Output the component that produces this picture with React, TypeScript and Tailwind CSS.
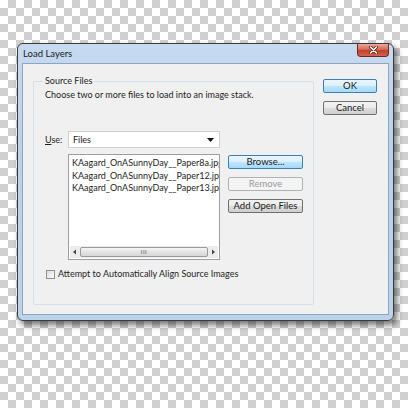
import React from "react";

const files = [
  "KAagard_OnASunnyDay__Paper8a.jpg",
  "KAagard_OnASunnyDay__Paper12.jpg",
  "KAagard_OnASunnyDay__Paper13.jpg",
];

function WinButton({
  label,
  kind = "normal",
  className = "",
}: {
  label: string;
  kind?: "normal" | "default" | "disabled";
  className?: string;
}) {
  const look =
    kind === "default"
      ? "border-[#3c7fb1] bg-[linear-gradient(#eaf6fd,#d9f0fc_50%,#bee6fd_50%,#a7d9f5)] text-[#1a1a1a]"
      : kind === "disabled"
      ? "border-[#adb2b5] bg-[#f4f4f4] text-[#9a9a9a]"
      : "border-[#707070] bg-[linear-gradient(#f2f2f2,#ebebeb_50%,#dddddd_50%,#cfcfcf)] text-[#1a1a1a]";
  return (
    <div
      className={`h-[14px] rounded-[2px] border flex items-center justify-center text-[9.5px] leading-none ${look} ${className}`}
    >
      {label}
    </div>
  );
}

export default function App() {
  return (
    <div className="w-[408px] h-[408px] relative overflow-hidden bg-white bg-[conic-gradient(#d0d0d0_25%,#ffffff_0_50%,#d0d0d0_0_75%,#ffffff_0)] bg-size-[16px_16px] font-['Lato','Noto_Sans',sans-serif] text-[#1e1e1e]">
      {/* dialog window */}
      <div className="absolute left-[17px] top-[43px] w-[377px] h-[278px] rounded-[6px] border border-[#3a3a3a] bg-[linear-gradient(#c6daf0,#b9d1ea_40%,#bcd3ec)] shadow-[3px_4px_6px_rgba(0,0,0,0.55)] flex flex-col">
        {/* title bar */}
        <div className="h-[19px] flex items-start justify-between pl-[5px] pr-[4px]">
          <span className="mt-[4px] text-[9.5px] leading-[12px] text-[#1a1a1a]">Load Layers</span>
          <div className="w-[32px] h-[13px] rounded-b-[4px] border border-t-0 border-[#6e2a20] bg-[linear-gradient(#e9a99a,#d46b56_45%,#c2402b_55%,#d5654e)] flex items-center justify-center">
            <svg width="9" height="8" viewBox="0 0 9 8">
              <path d="M1.5 1 L7.5 7 M7.5 1 L1.5 7" stroke="#4a1a12" strokeWidth="3" strokeLinecap="round" />
              <path d="M1.5 1 L7.5 7 M7.5 1 L1.5 7" stroke="#ffffff" strokeWidth="1.6" strokeLinecap="round" />
            </svg>
          </div>
        </div>

        {/* client area */}
        <div className="flex-1 mx-[4px] mb-[5px] border border-[#8ea5bf] bg-[#f0f0f0] flex items-start pl-[10px]">
          {/* Source Files group */}
          <div className="relative mt-[17px] w-[281px] h-[224px] border border-[#d5dfe5] rounded-[2px] pl-[11px] pt-[7px]">
            <span className="absolute left-[9px] -top-[7px] px-[2px] bg-[#f0f0f0] text-[9px] leading-[12px]">
              Source Files
            </span>
            <div className="text-[9px] leading-[12px]">
              Choose two or more files to load into an image stack.
            </div>

            <div className="mt-[30px] flex items-center">
              <span className="w-[23px] text-[9px] leading-[12px]">
                <span className="underline">U</span>se:
              </span>
              <div className="w-[152px] h-[17px] bg-white border border-[#d0d0d0] flex items-center justify-between pl-[4px] pr-[5px]">
                <span className="text-[9px] leading-[12px]">Files</span>
                <svg width="7" height="4" viewBox="0 0 7 4">
                  <path d="M0 0 H7 L3.5 4 Z" fill="#111" />
                </svg>
              </div>
            </div>

            <div className="mt-[6px] flex items-start">
              <div className="ml-[23px] w-[152px] h-[106px] bg-white border border-[#9a9fa7] flex flex-col">
                <div className="flex-1 overflow-hidden pl-[3px] pt-[2px]">
                  {files.map((f) => (
                    <div key={f} className="text-[9px] leading-[12.5px] whitespace-nowrap">
                      {f}
                    </div>
                  ))}
                </div>
                <div className="h-[12px] mx-[1px] mb-[1px] bg-[#ececec] flex items-center px-[2px] gap-[2px]">
                  <svg width="6" height="6" viewBox="0 0 6 6">
                    <path d="M4 0.5 V5.5 L1 3 Z" fill="#444" />
                  </svg>
                  <div className="flex-1 h-[10px] rounded-[2px] border border-[#9a9a9a] bg-[linear-gradient(#f6f6f6,#e4e4e4_50%,#d6d6d6)] flex items-center justify-center">
                    <span className="text-[6px] leading-none tracking-[0.5px] text-[#555]">III</span>
                  </div>
                  <svg width="6" height="6" viewBox="0 0 6 6">
                    <path d="M2 0.5 V5.5 L5 3 Z" fill="#444" />
                  </svg>
                </div>
              </div>
              <div className="ml-[8px] mt-[1px] w-[75px] flex flex-col gap-[8px]">
                <WinButton label="Browse..." kind="default" />
                <WinButton label="Remove" kind="disabled" />
                <WinButton label="Add Open Files" />
              </div>
            </div>

            <div className="mt-[8px] flex items-center">
              <div className="ml-[1px] w-[9px] h-[9px] border border-[#8e8f8f] bg-[linear-gradient(135deg,#dcdcdc,#fbfbfb)]" />
              <span className="ml-[3px] text-[9px] leading-[12px]">
                Attempt to Automatically Align Source Images
              </span>
            </div>
          </div>

          {/* OK / Cancel */}
          <div className="ml-[9px] mt-[15px] w-[54px] flex flex-col gap-[8px]">
            <WinButton label="OK" kind="default" />
            <WinButton label="Cancel" />
          </div>
        </div>
      </div>
    </div>
  );
}
